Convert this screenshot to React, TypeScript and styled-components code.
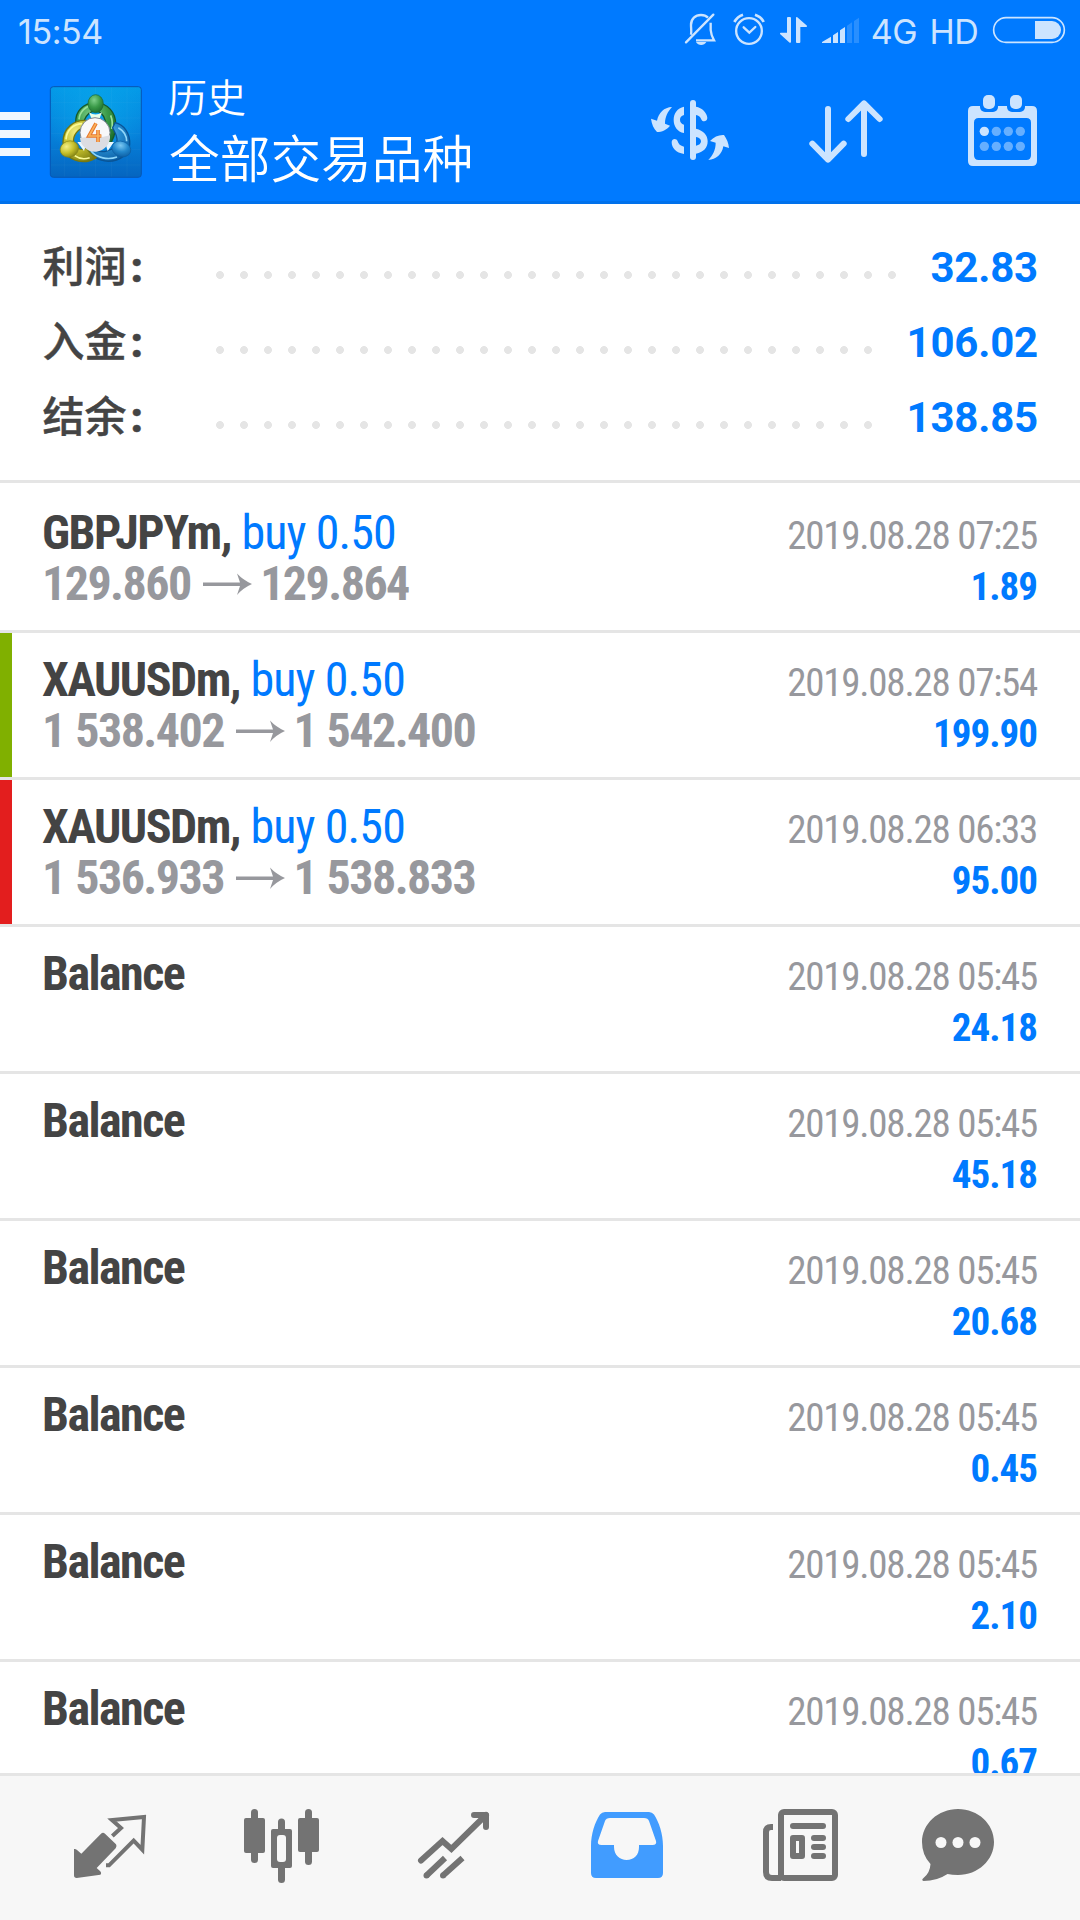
import React from "react";
import styled, { createGlobalStyle } from "styled-components";

const Global = createGlobalStyle`
  *, *::before, *::after { box-sizing: border-box; }
  html, body { margin: 0; padding: 0; background: #fff; }
`;

const latin = '"Roboto", "Noto Sans CJK SC", sans-serif';
const blue = "#007aff";
const rule = "#e5e5e5";
const iconTint = "#cce4ff";
const navGray = "#737373";

const Screen = styled.div`
  width: 1080px;
  height: 1920px;
  display: flex;
  flex-direction: column;
  overflow: hidden;
  background: #fff;
  font-family: ${latin};
`;

const Header = styled.header`
  flex: none;
  height: 204px;
  background: ${blue};
  box-shadow: inset 0 -3px 0 #0071eb;
`;

const StatusBar = styled.div`
  height: 60px;
  display: flex;
  align-items: center;
  padding-left: 18px;
  color: ${iconTint};
  font: 380 34px/63px "Inter", sans-serif;
  letter-spacing: -0.4px;
`;

const Clock = styled.span`
  flex: 1;
  height: 60px;
`;

const StatusText = styled.span`
  width: 60px;
  height: 60px;
  text-align: center;
  white-space: nowrap;
`;

const StatusIcon = styled.svg`
  flex: none;
  height: 60px;
  display: block;
`;

const AppBar = styled.div`
  height: 144px;
  padding-top: 4px;
  display: flex;
  align-items: center;
`;

const MenuButton = styled.div`
  width: 30px;
  display: flex;
  flex-direction: column;
  gap: 10px;
`;

const MenuLine = styled.i`
  height: 8px;
  background: #f0f7ff;
`;

const Logo = styled.svg`
  width: 112px;
  height: 112px;
  margin-left: 10px;
`;

const Titles = styled.div`
  flex: 1;
  margin-left: 16px;
  color: #fff;
  font-family: "Noto Sans CJK SC", sans-serif;
  font-weight: 350;
`;

const Subtitle = styled.div`
  font-size: 39px;
  line-height: 44px;
`;

const Title = styled.div`
  padding-left: 1px;
  font-size: 50.7px;
  line-height: 78px;
`;

const Actions = styled.div`
  display: flex;
  gap: 60px;
  padding-right: 30px;
`;

const Icon = styled.svg`
  width: 96px;
  height: 96px;
  display: block;
`;

const Summary = styled.section`
  flex: none;
  height: 279px;
  padding: 26px 42px 0;
  border-bottom: 3px solid ${rule};
`;

const SummaryRow = styled.div`
  height: 75px;
  display: flex;
  font-size: 42px;
  line-height: 75px;
`;

const Label = styled.div`
  width: 166px;
  padding-left: 0.5px;
  color: #444;
  font-family: "Noto Sans CJK SC", sans-serif;
  font-weight: 500;
  line-height: 67px;
  -webkit-text-stroke: 0.4px #444;
`;

const Colon = styled.span`
  font-family: Roboto, sans-serif;
  font-weight: 900;
  margin-left: 4px;
`;

const Dots = styled.div<{ $count: number }>`
  width: ${(p) => p.$count * 24}px;
  background: radial-gradient(circle at 12px 45px, ${rule} 3.6px, transparent 4.2px) 0 0 / 24px 75px repeat-x;
`;

const SummaryValue = styled.div`
  margin-left: auto;
  color: ${blue};
  font-weight: 700;
  letter-spacing: -0.2px;
`;

const List = styled.main`
  flex: 1;
  min-height: 0;
  overflow: hidden;
`;

const Row = styled.article<{ $mark?: string; $first?: boolean }>`
  height: 147px;
  display: flex;
  justify-content: space-between;
  border-top: 3px solid ${(p) => (p.$first ? "#fff" : rule)};
  padding: 21px 43px 0 42px;
  background: linear-gradient(${(p) => p.$mark ?? "#fff"}, ${(p) => p.$mark ?? "#fff"}) 0 0 / 12px 100% no-repeat;
  font-stretch: condensed;
  line-height: 51px;
`;

const Deal = styled.div`
  font-size: 48px;
`;

const Symbol = styled.div`
  color: #444;
  font-weight: 700;
  letter-spacing: -1.55px;
  white-space: pre;
`;

const Volume = styled.span`
  padding-left: 0.5px;
  color: ${blue};
  font-weight: 400;
  letter-spacing: -0.9px;
`;

const Prices = styled.div`
  display: flex;
  align-items: center;
  color: #97989d;
  font-weight: 700;
  letter-spacing: -1.55px;
  word-spacing: 1px;
`;

const Arrow = styled.svg`
  width: 49px;
  height: 24px;
  margin: 0 8px 0 12.5px;
`;

const Result = styled.div`
  padding-top: 4px;
  text-align: right;
  font-size: 39px;
`;

const Time = styled.div`
  color: #97989d;
  letter-spacing: -1.25px;
`;

const Profit = styled.div`
  color: ${blue};
  font-weight: 700;
  letter-spacing: -1px;
`;

const NavBar = styled.nav`
  flex: none;
  height: 147px;
  display: grid;
  grid-template-columns: 172px 172px 172px 174px 172px 144px;
  justify-items: center;
  align-items: center;
  padding-left: 24px;
  border-top: 3px solid ${rule};
  background: #f7f7f7;
`;

const summary = [
  { label: "利润", value: "32.83", dots: 29 },
  { label: "入金", value: "106.02", dots: 28 },
  { label: "结余", value: "138.85", dots: 28 },
];

type Entry = { name: string; volume?: string; from?: string; to?: string; mark?: string; time: string; profit: string };

const entries: Entry[] = [
  { name: "GBPJPYm,", volume: "buy 0.50", from: "129.860", to: "129.864", time: "07:25", profit: "1.89" },
  { name: "XAUUSDm,", volume: "buy 0.50", from: "1 538.402", to: "1 542.400", mark: "#80b000", time: "07:54", profit: "199.90" },
  { name: "XAUUSDm,", volume: "buy 0.50", from: "1 536.933", to: "1 538.833", mark: "#e31e1e", time: "06:33", profit: "95.00" },
  { name: "Balance", time: "05:45", profit: "24.18" },
  { name: "Balance", time: "05:45", profit: "45.18" },
  { name: "Balance", time: "05:45", profit: "20.68" },
  { name: "Balance", time: "05:45", profit: "0.45" },
  { name: "Balance", time: "05:45", profit: "2.10" },
  { name: "Balance", time: "05:45", profit: "0.67" },
];

const StatusIcons = () => (
  <>
    <StatusIcon width={48} viewBox="120 0 144 180" fill="none" stroke={iconTint} strokeWidth={7}>
      <path d="M153 104C155 95 153 86 153 75C153 56 166 45 183 45C192 45 199 48 204 53" />
      <path d="M138 127L220 44" strokeLinecap="round" />
      <path d="M212 68V90C213 102 217 112 222 121H168" />
      <path d="M168 126H199C193 138 174 138 168 126Z" fill={iconTint} stroke="none" />
    </StatusIcon>
    <StatusIcon width={46} viewBox="264 0 138 180" fill="none" stroke={iconTint} strokeWidth={7}>
      <circle cx="327" cy="93" r="38.5" />
      <path d="M311 82L328 98L346 81" strokeLinecap="round" />
      <path d="M283 66C289 55 297 48 309 44M345 44C357 48 366 55 371 66" strokeWidth={8} />
    </StatusIcon>
    <StatusIcon width={42} viewBox="402 0 126 180" fill={iconTint}>
      <path d="M422 98H441V54Q441 51 444 51H450Q453 51 453 54V126Q453 129 449 128L420 102Q419 99 422 98Z" />
      <path d="M468 54Q468 50 472 52L501 77Q502 80 499 81H481V126Q481 129 478 129H471Q468 129 468 126Z" />
    </StatusIcon>
    <StatusIcon width={48} viewBox="528 0 144 180" fill={iconTint}>
      <path d="M546 129V126L573 110V129ZM579 129V106L594 96V129ZM600 129V91L615 81V129Z" />
      <path d="M621 129V77L636 67V129ZM642 129V63L657 53V129Z" opacity={0.2} />
    </StatusIcon>
    <StatusText>4G</StatusText>
    <StatusText>HD</StatusText>
    <StatusIcon width={96} viewBox="1032 0 288 180">
      <rect x="1061" y="53" width="212" height="74" rx="37" fill="none" stroke={iconTint} strokeWidth={5} />
      <path d="M1185 63H1236a27 27 0 0 1 0 54H1185Z" fill={iconTint} />
    </StatusIcon>
  </>
);

const AppLogo = () => (
  <Logo viewBox="0 0 336 336">
    <defs>
      <linearGradient id="tile" x1="0" y1="0" x2="0" y2="1">
        <stop offset="0" stopColor="#049be8" />
        <stop offset="0.5" stopColor="#0683dc" />
        <stop offset="1" stopColor="#0565c0" />
      </linearGradient>
      <radialGradient id="glow" cx="0.5" cy="0.3" r="0.55">
        <stop offset="0" stopColor="#0aaeee" stopOpacity="0.6" />
        <stop offset="1" stopColor="#0aaeee" stopOpacity="0" />
      </radialGradient>
      <radialGradient id="green" cx="0.4" cy="0.3" r="0.8">
        <stop offset="0" stopColor="#7fd08a" />
        <stop offset="0.5" stopColor="#3a9a48" />
        <stop offset="1" stopColor="#176628" />
      </radialGradient>
      <radialGradient id="yellow" cx="0.4" cy="0.3" r="0.8">
        <stop offset="0" stopColor="#f3ef86" />
        <stop offset="0.5" stopColor="#c5c02c" />
        <stop offset="1" stopColor="#77780f" />
      </radialGradient>
      <radialGradient id="azure" cx="0.4" cy="0.3" r="0.8">
        <stop offset="0" stopColor="#7cc8f2" />
        <stop offset="0.5" stopColor="#2287cc" />
        <stop offset="1" stopColor="#0a589c" />
      </radialGradient>
    </defs>
    <rect x="31" y="26" width="273" height="272" rx="9" fill="url(#tile)" stroke="#0757b4" strokeWidth="3" />
    <rect x="33" y="28" width="269" height="268" rx="8" fill="url(#glow)" />
    <path d="M73 28V296M120 28V296M167 28V296M214 28V296M261 28V296M33 73H302M33 120H302M33 167H302M33 214H302M33 261H302" stroke="#fff" strokeOpacity="0.06" strokeWidth="2" />
    <path d="M107 134C106 100 128 76 166 74C205 76 227 104 227 138C227 165 219 189 205 204C196 190 204 150 196 128C190 108 178 99 166 99C149 99 139 112 132 128Z" fill="url(#green)" stroke="#17592b" strokeWidth="4" />
    <path d="M117 124C119 101 137 85 154 83M212 112C217 125 218 140 215 153" stroke="#9be09a" strokeWidth="5" fill="none" />
    <path d="M225 134C252 140 271 165 269 200C266 230 240 249 205 250C170 249 151 231 140 208C160 211 173 226 197 220C219 215 230 205 231 188C232 170 222 160 218 149Z" fill="url(#azure)" stroke="#095496" strokeWidth="4" />
    <path d="M235 149C252 159 260 174 260 190M153 219C171 240 204 247 231 237" stroke="#8ed6fa" strokeWidth="5" fill="none" />
    <path d="M143 128C102 123 69 151 69 193C71 229 92 249 129 251C145 251 158 247 168 239C151 231 147 219 139 210C122 221 105 208 101 195C97 172 114 151 139 146Z" fill="url(#yellow)" stroke="#77780f" strokeWidth="4" />
    <path d="M78 184C80 155 101 139 126 137M104 233C118 243 135 244 149 239" stroke="#fbfa95" strokeWidth="5" fill="none" />
    <path d="M112 192H142L132 219ZM222 192H195L203 219Z" fill="#e9f7ff" />
    <path d="M147 103Q167 116 186 103L176 128H157Z" fill="#e9ffe9" />
    <ellipse cx="167" cy="77" rx="23" ry="27" fill="url(#green)" stroke="#1c6630" strokeWidth="2" />
    <ellipse cx="88" cy="213" rx="28" ry="24" transform="rotate(-20 88 213)" fill="url(#yellow)" stroke="#85851a" strokeWidth="2" />
    <ellipse cx="244" cy="213" rx="29" ry="23" transform="rotate(20 244 213)" fill="url(#azure)" stroke="#0b5fa6" strokeWidth="2" />
    <circle cx="165" cy="164" r="45" fill="#f8f8fa" stroke="#7d8790" strokeWidth="3" />
    <path d="M120 180A45 45 0 0 0 210 172Q185 180 165 178T120 180Z" fill="#dcdde2" />
    <path d="M168 136L147 174H184M174 156V192" fill="none" stroke="#e8752a" strokeWidth="11" />
    <path d="M168 136L147 174H184M174 156V192" fill="none" stroke="#f9b25c" strokeWidth="5" />
  </Logo>
);

const DollarIcon = () => (
  <Icon viewBox="6 258 288 288" fill={iconTint}>
    <rect x="150" y="300" width="18" height="180" rx="9" />
    <path d="M168 320C186 323 201 338 202 354C201 366 186 367 183 356C180 350 176 347 168 345Z" />
    <path d="M132 320C112 324 101 340 101 359C101 379 112 395 132 399V374C124 371 120 366 120 359C120 352 124 347 132 345Z" />
    <path fillRule="evenodd" d="M168 386C191 392 203 405 203 424C203 444 190 457 168 461ZM168 411V437C177 436 183 431 183 424C183 418 177 412 168 411Z" />
    <path d="M132 462C108 458 95 444 95 426C96 414 110 414 113 424C115 432 121 438 132 440Z" />
    <path d="M96 321C72 322 56 338 51 362L33 356C35 372 41 386 51 396C66 396 80 389 90 377L75 371C75 350 84 334 96 321Z" />
    <path d="M205 480C218 466 227 450 227 428L210 423C222 410 236 404 252 405C260 416 266 430 267 444L250 439C246 464 228 478 205 480Z" />
  </Icon>
);

const SortIcon = () => (
  <Icon viewBox="474 258 288 288" fill="none" stroke={iconTint} strokeWidth={18} strokeLinecap="round" strokeLinejoin="round">
    <path d="M564 327V476M517 431L564 479L611 431" />
    <path d="M672 462V314M625 357L672 310L719 357" />
  </Icon>
);

const CalendarIcon = () => (
  <Icon viewBox="942 258 288 288" fill={iconTint}>
    <path fillRule="evenodd" d="M999 318H1176Q1191 318 1191 333V483Q1191 498 1176 498H999Q984 498 984 483V333Q984 318 999 318ZM1016 354Q1002 354 1002 368V466Q1002 480 1016 480H1159Q1173 480 1173 466V368Q1173 354 1159 354Z" />
    {[1047, 1128].map((x) => (
      <g key={x}>
        <rect x={x - 27} y="300" width="54" height="36" rx="15" fill={blue} />
        <rect x={x - 18} y="285" width="36" height="42" rx="15" />
      </g>
    ))}
    {[394, 439].flatMap((y) =>
      [1033, 1069, 1105, 1141].map((x) => (
        <circle key={`${x}-${y}`} cx={x} cy={y} r="14" opacity={x === 1033 && y === 394 ? 1 : 0.5} />
      )),
    )}
  </Icon>
);

const PriceArrow = () => (
  <Arrow viewBox="0 0 49 24" fill="#97989d">
    <path d="M0 10.5H37L34 1.5Q40 8 49 12Q40 16 34 23L37 14H0Z" />
  </Arrow>
);

const QuotesIcon = () => (
  <Icon viewBox="6 30 288 288" fill={navGray}>
    <path d="M42 177Q47 176 51 180L64 191L123 131Q129 126 135 131L168 163Q172 169 167 175L110 234L120 243Q126 250 121 254L50 264Q42 264 42 256Z" />
    <path d="M157 138L183 114L156 90L252 81L247 179L221 152L147 226H138" fill="none" stroke={navGray} strokeWidth={12} />
  </Icon>
);

const ChartIcon = () => (
  <Icon viewBox="0 0 96 96" fill={navGray}>
    <rect x="10" y="18" width="21" height="35" rx="2" />
    <rect x="17" y="9" width="7" height="54" rx="3.5" />
    <rect x="37" y="29" width="21" height="39" rx="2" />
    <rect x="44" y="18.5" width="7" height="64.5" rx="3.5" />
    <rect x="43" y="35" width="9" height="27" rx="3" fill="#f7f7f7" />
    <rect x="64" y="18" width="21" height="34" rx="2" />
    <rect x="71" y="9" width="7" height="56" rx="3.5" />
  </Icon>
);

const TrendIcon = () => (
  <Icon viewBox="0 0 96 96" fill="none" stroke={navGray} strokeWidth={6}>
    <path d="M15 60.5L36.5 41L45.4 49L80 15" strokeLinecap="round" />
    <path d="M68 15H80V27" strokeLinecap="round" strokeLinejoin="round" />
    <path d="M39 58L20.5 75.5M56.5 58L37 75.5" />
    <circle cx="20.5" cy="75.5" r="3" fill={navGray} stroke="none" />
    <circle cx="37" cy="75.5" r="3" fill={navGray} stroke="none" />
  </Icon>
);

const InboxIcon = () => (
  <Icon viewBox="0 0 96 96" fill="#419cff">
    <path
      fillRule="evenodd"
      d="M12 46C12 34 16 22 21 14.5Q23 12 26 12H70Q73 12 75 14.5C80 22 84 34 84 46V73Q84 78 79 78H17Q12 78 12 73ZM31 18Q27 18 26 21L19 41Q18 45 22.5 45H35V47C35 55 41 60 47.5 60C55 60 60 55 60 47V45H73.5Q78 45 77 41L70 21Q69 18 65 18Z"
    />
  </Icon>
);

const NewsIcon = () => (
  <Icon viewBox="0 0 96 96" fill={navGray}>
    <rect x="29" y="12" width="54" height="66" rx="3" fill="none" stroke={navGray} strokeWidth={6} />
    <path d="M21 27H19Q14 27 14 32V72Q14 78 20 78H29" fill="none" stroke={navGray} strokeWidth={6} />
    <rect x="38" y="23" width="36" height="6" rx="3" />
    <path fillRule="evenodd" d="M41 35H50Q53 35 53 38V56Q53 59 50 59H41Q38 59 38 56V38Q38 35 41 35ZM44 41V53H47V41Z" />
    <rect x="59" y="35" width="15" height="6" rx="3" />
    <rect x="59" y="44" width="15" height="6" rx="3" />
    <rect x="59" y="53" width="15" height="6" rx="3" />
  </Icon>
);

const ChatIcon = () => (
  <Icon viewBox="0 0 96 96" fill={navGray}>
    <path d="M48 9C68 9 84 24 84 42C84 60 68 75 48 75Q42 75 37.5 74Q27 81 13.5 81Q11 80 13.5 78Q20 73 20.5 64Q12 55 12 42C12 24 28 9 48 9Z" />
    {[31, 48, 65].map((x) => (
      <circle key={x} cx={x} cy="42.5" r="5.5" fill="#f7f7f7" />
    ))}
  </Icon>
);

export default function App() {
  return (
    <Screen>
      <Global />
      <Header>
        <StatusBar>
          <Clock>15:54</Clock>
          <StatusIcons />
        </StatusBar>
        <AppBar>
          <MenuButton>
            <MenuLine />
            <MenuLine />
            <MenuLine />
          </MenuButton>
          <AppLogo />
          <Titles>
            <Subtitle>历史</Subtitle>
            <Title>全部交易品种</Title>
          </Titles>
          <Actions>
            <DollarIcon />
            <SortIcon />
            <CalendarIcon />
          </Actions>
        </AppBar>
      </Header>
      <Summary>
        {summary.map((s) => (
          <SummaryRow key={s.label}>
            <Label>
              {s.label}
              <Colon>:</Colon>
            </Label>
            <Dots $count={s.dots} />
            <SummaryValue>{s.value}</SummaryValue>
          </SummaryRow>
        ))}
      </Summary>
      <List>
        {entries.map((e, i) => (
          <Row key={i} $first={i === 0} $mark={e.mark}>
            <Deal>
              <Symbol>
                {e.name}
                {e.volume && <Volume> {e.volume}</Volume>}
              </Symbol>
              {e.from && (
                <Prices>
                  {e.from}
                  <PriceArrow />
                  {e.to}
                </Prices>
              )}
            </Deal>
            <Result>
              <Time>2019.08.28 {e.time}</Time>
              <Profit>{e.profit}</Profit>
            </Result>
          </Row>
        ))}
      </List>
      <NavBar>
        <QuotesIcon />
        <ChartIcon />
        <TrendIcon />
        <InboxIcon />
        <NewsIcon />
        <ChatIcon />
      </NavBar>
    </Screen>
  );
}
